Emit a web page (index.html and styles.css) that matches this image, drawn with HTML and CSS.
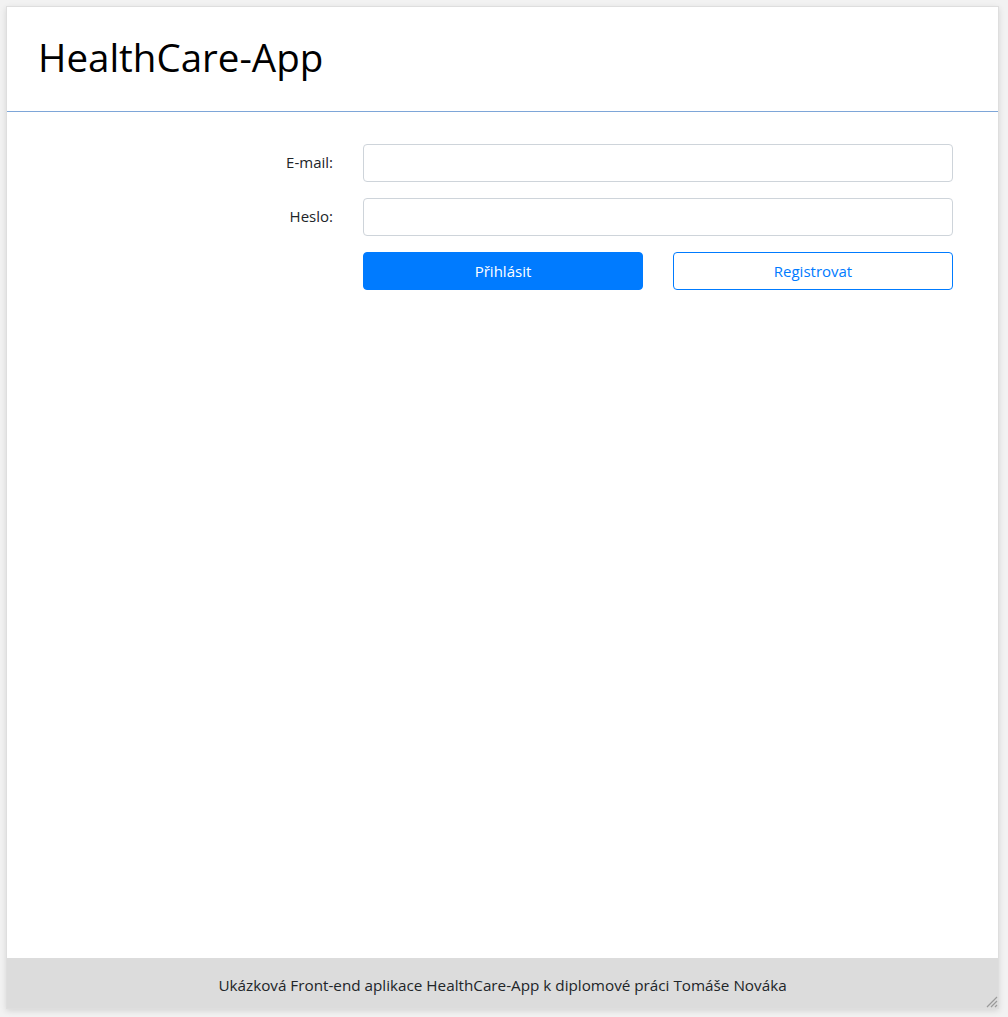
FILE: index.html
```html
<!DOCTYPE html>
<html lang="cs">
<head>
<meta charset="utf-8">
<title>HealthCare-App</title>
<link rel="stylesheet" href="styles.css">
</head>
<body>
<div class="app">
  <header class="app-header">
    <h1 class="app-title">HealthCare-App</h1>
  </header>
  <main class="app-main">
    <form class="login-form">
      <label class="form-label" for="email">E-mail:</label>
      <input class="form-input" id="email" type="email">
      <label class="form-label" for="heslo">Heslo:</label>
      <input class="form-input" id="heslo" type="password">
      <div class="form-actions">
        <button class="btn btn-primary" type="button">Přihlásit</button>
        <button class="btn btn-outline" type="button">Registrovat</button>
      </div>
    </form>
  </main>
  <footer class="app-footer">
    <span>Ukázková Front-end aplikace HealthCare-App k diplomové práci Tomáše Nováka</span>
    <svg class="grip" width="14" height="14" viewBox="0 0 14 14">
      <path d="M13 3 L3 13 M13 7 L7 13 M13 11 L11 13" stroke="#9a9a9a" stroke-width="1.2" fill="none"/>
    </svg>
  </footer>
</div>
</body>
</html>
```
FILE: styles.css
```css
* { box-sizing: border-box; }
html, body { margin: 0; height: 100%; }
body {
  background: #f2f2f2;
  padding: 6px 9px 8px 6px;
  font-family: "Open Sans", "Noto Sans", sans-serif;
  color: #212529;
}
.app {
  height: 100%;
  background: #fff;
  border: 1px solid #dedede;
  box-shadow: 0 2px 6px rgba(0,0,0,0.12);
  display: flex;
  flex-direction: column;
  position: relative;
}
.app-header {
  height: 105px;
  border-bottom: 1px solid #7ea6d8;
  display: flex;
  align-items: center;
  padding: 0 0 4px 31px;
}
.app-title {
  margin: 0;
  font-weight: 400;
  font-size: 38.5px;
  color: #000;
  letter-spacing: 0;
}
.app-main {
  flex: 1;
  padding: 32px 45px 0 0;
}
.login-form {
  display: grid;
  grid-template-columns: 1fr 590px;
  column-gap: 30px;
  row-gap: 16px;
  align-items: center;
}
.form-label {
  text-align: right;
  font-size: 15px;
  color: #212529;
  padding-bottom: 3px;
}
.form-input {
  height: 38px;
  border: 1px solid #ced4da;
  border-radius: 4px;
  background: #fff;
  font: inherit;
}
.form-actions {
  grid-column: 2;
  display: grid;
  grid-template-columns: 1fr 1fr;
  column-gap: 30px;
}
.btn {
  height: 38px;
  border-radius: 4px;
  font-family: inherit;
  font-size: 15px;
  cursor: pointer;
}
.btn-primary {
  background: #007bff;
  border: 1px solid #007bff;
  color: #fff;
}
.btn-outline {
  background: #fff;
  border: 1px solid #007bff;
  color: #007bff;
}
.app-footer {
  height: 50px;
  background: #dcdcdc;
  display: flex;
  align-items: center;
  justify-content: center;
  font-size: 15.25px;
  color: #212529;
  position: relative;
  padding-top: 3px;
}
.grip {
  position: absolute;
  right: 0;
  bottom: 0;
}
```
